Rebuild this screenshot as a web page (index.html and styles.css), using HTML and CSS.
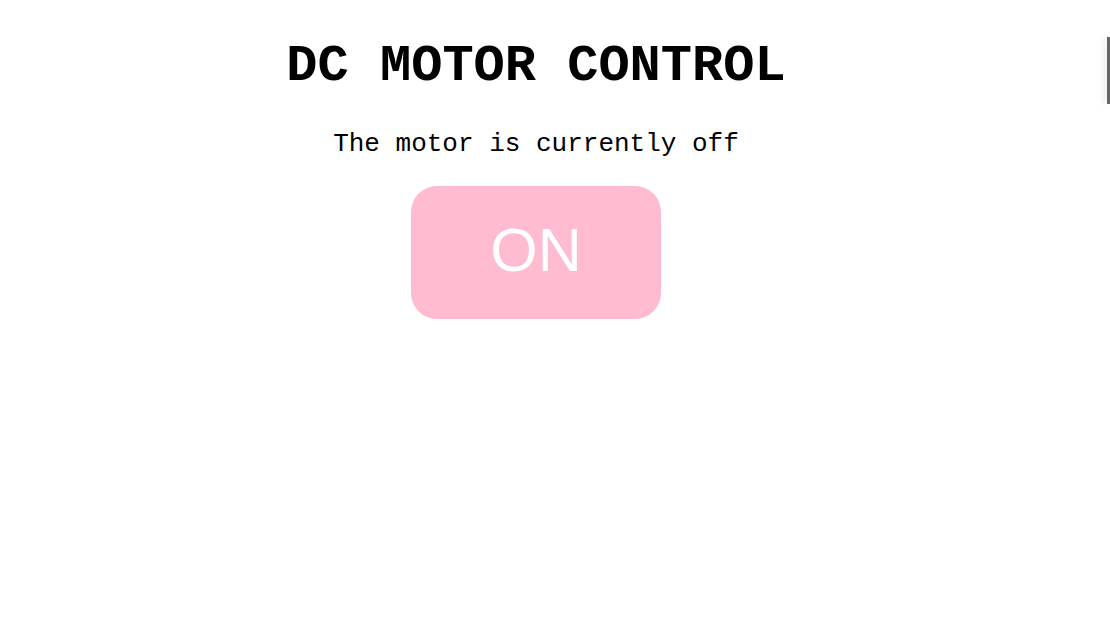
FILE: index.html
```html
<!DOCTYPE html>
<html>
<head>
<meta charset="utf-8">
<link rel="stylesheet" href="styles.css">
</head>
<body>
<main class="page">
  <h1 class="title">DC MOTOR CONTROL</h1>
  <p class="status">The motor is currently off</p>
  <button class="toggle">ON</button>
</main>
<div class="edge"></div>
</body>
</html>
```
FILE: styles.css
```css
html, body {
  margin: 0;
  padding: 0;
  background: #ffffff;
}
.page {
  width: 1072px;
  display: flex;
  flex-direction: column;
  align-items: center;
  font-family: "Liberation Mono", "Courier New", monospace;
  color: #000;
}
.title {
  margin: 41px 0 0;
  font-size: 52px;
  line-height: 52px;
  font-weight: bold;
}
.status {
  margin: 36px 0 0;
  font-size: 26px;
  line-height: 30px;
}
.toggle {
  margin-top: 27px;
  width: 250px;
  height: 133px;
  border: none;
  border-radius: 26px;
  background: #ffbbd0;
  color: #ffffff;
  font-family: "Liberation Sans", Arial, sans-serif;
  font-size: 61px;
  padding: 0 0 5px;
}
.edge {
  position: absolute;
  top: 37px;
  right: 0;
  width: 3px;
  height: 67px;
  background: #666;
  box-shadow: -3px 0 6px rgba(0,0,0,0.12);
}
```
